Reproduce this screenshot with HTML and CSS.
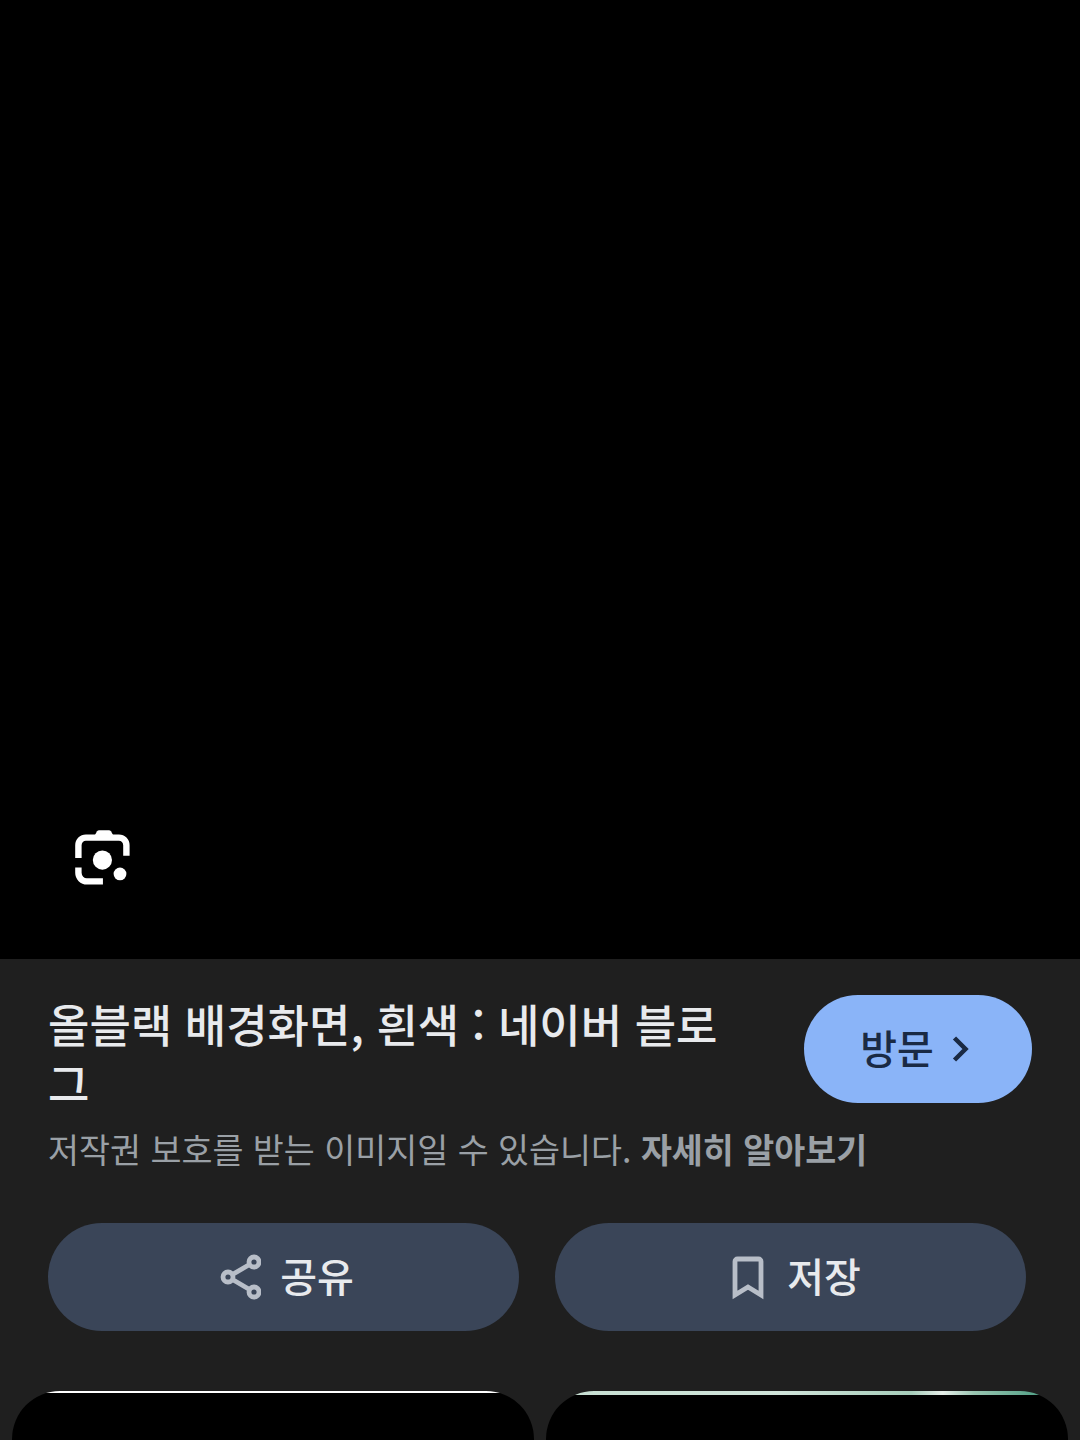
FILE: index.html
```html
<!DOCTYPE html>
<html lang="ko">
<head>
    <meta charset="UTF-8">
    <meta name="viewport" content="width=device-width, initial-scale=1.0">
    <title>올블랙 배경화면</title>
    <link rel="stylesheet" href="styles.css">
</head>
<body>
    <div class="preview">
        <svg class="lens-icon" width="64" height="64" viewBox="0 0 60 60">
            <path class="lens-line" d="M6 29V17a7 7 0 0 1 7-7h31a7 7 0 0 1 7 7v10M6 38v5a8 8 0 0 0 8 8h15"/>
            <path class="lens-fill" d="M20 10l3.500-6q.6-1 2-1h9q1.400 0 2 1l3.500 6z"/>
            <circle class="lens-fill" cx="28.500" cy="31" r="9"/>
            <circle class="lens-fill" cx="45" cy="44" r="6"/>
        </svg>
    </div>
    <div class="sheet">
        <div class="head">
            <h1>올블랙 배경화면, 흰색 : 네이버 블로그</h1>
            <a class="visit" href="#"><span class="label">방문</span>
                <svg width="28" height="28" viewBox="0 0 28 28"><path d="M6.500 3L17.500 14 6.500 25"/></svg>
            </a>
        </div>
        <p class="notice">저작권 보호를 받는 이미지일 수 있습니다. <b>자세히 알아보기</b></p>
        <div class="actions">
            <button class="action">
                <svg width="48" height="48" viewBox="-5.500 0 48 48">
                    <path d="M31 11.500L14 21.500M14 26.500l17 10"/>
                    <circle cx="35.500" cy="9" r="5"/>
                    <circle cx="9.500" cy="24" r="5"/>
                    <circle cx="35.500" cy="39" r="5"/>
                </svg>
                <span class="label">공유</span>
            </button>
            <button class="action">
                <svg width="48" height="48" viewBox="-10 -2 48 48">
                    <path d="M5 6.500a2.500 2.500 0 0 1 2.500-2.500h21a2.500 2.500 0 0 1 2.500 2.500V40L18 32 5 40z"/>
                </svg>
                <span class="label">저장</span>
            </button>
        </div>
        <div class="related">
            <div class="thumb thumb-white"></div>
            <div class="thumb thumb-green"></div>
        </div>
    </div>
</body>
</html>
```

FILE: styles.css
```css
html, body {
    margin: 0;
    height: 1440px;
    overflow: hidden;
    background-color: #1f1f1f;
    font-family: "Noto Sans CJK KR", "Noto Sans", sans-serif;
}
.preview {
    position: relative;
    height: 959px;
    background-color: #000;
}
.lens-icon {
    position: absolute;
    left: 72px;
    top: 827px;
}
.lens-line {
    fill: none;
    stroke: #fff;
    stroke-width: 6;
}
.lens-fill {
    fill: #fff;
}
.sheet {
    padding: 36px 12px 0;
}
.head {
    display: flex;
    justify-content: space-between;
    align-items: flex-start;
    padding: 0 36px;
}
h1 {
    width: 700px;
    margin: -1px 0 1px;
    font-size: 45px;
    font-weight: 500;
    line-height: 59px;
    color: #e8eaed;
}
.label {
    margin-bottom: 5px;
}
.visit {
    display: flex;
    align-items: center;
    justify-content: center;
    gap: 14px;
    width: 228px;
    height: 108px;
    border-radius: 54px;
    background-color: #8ab4f8;
    color: #1a2a44;
    font-size: 40px;
    font-weight: 500;
    text-decoration: none;
}
.visit svg {
    fill: none;
    stroke: #1a2a44;
    stroke-width: 4.5;
}
.notice {
    margin: 12px 0 0;
    padding: 0 36px;
    font-size: 33.7px;
    line-height: 48px;
    color: #9aa0a6;
}
.notice b {
    font-weight: 700;
}
.actions {
    display: flex;
    gap: 36px;
    margin-top: 50px;
    padding: 0 36px;
}
.action {
    display: flex;
    align-items: center;
    justify-content: center;
    gap: 19px;
    width: 471px;
    height: 108px;
    padding: 0;
    border: none;
    border-radius: 54px;
    background-color: #3a4558;
    color: #e8eaed;
    font-family: inherit;
    font-size: 40px;
    font-weight: 500;
}
.action svg {
    fill: none;
    stroke: #b8bec8;
    stroke-width: 4.8;
}
.related {
    display: flex;
    gap: 12px;
    margin-top: 60px;
}
.thumb {
    width: 522px;
    height: 49px;
    border-radius: 48px 48px 0 0;
}
.thumb-white {
    background: linear-gradient(#fff 2px, #000 2px);
}
.thumb-green {
    background:
        linear-gradient(#000, #000) 0 4px no-repeat,
        linear-gradient(90deg, #c6dfd2, #d0e4da 45%, #a6cdba 70%, #e6eee9 76%, #9ac6b2 82%, #55a288 94%);
}
```
